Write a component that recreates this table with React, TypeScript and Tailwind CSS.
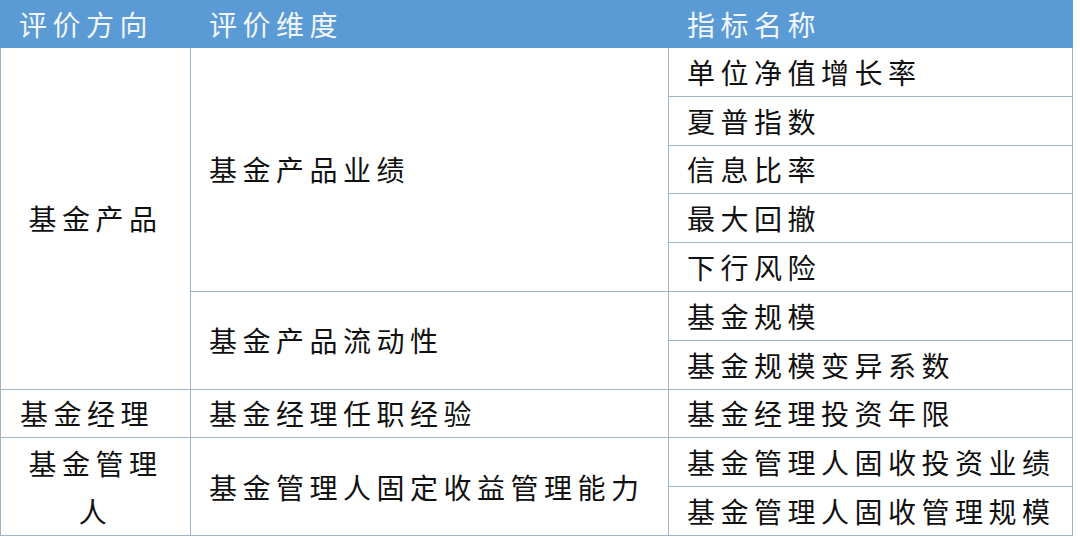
const font = { fontFamily: '"Noto Sans CJK SC", "Noto Sans", sans-serif' };

type Cell = { text: React.ReactNode; pos: string; align?: string };

const cells: Cell[] = [
  { text: "基金产品", pos: "col-start-1 row-start-1 row-span-7", align: "justify-center" },
  { text: "基金经理", pos: "col-start-1 row-start-8 row-span-1", align: "pl-[19px]" },
  {
    text: (
      <span className="text-center leading-[48px]">
        基金管理
        <br />人
      </span>
    ),
    pos: "col-start-1 row-start-9 row-span-2",
    align: "justify-center",
  },
  { text: "基金产品业绩", pos: "col-start-2 row-start-1 row-span-5" },
  { text: "基金产品流动性", pos: "col-start-2 row-start-6 row-span-2" },
  { text: "基金经理任职经验", pos: "col-start-2 row-start-8 row-span-1" },
  { text: "基金管理人固定收益管理能力", pos: "col-start-2 row-start-9 row-span-2" },
  { text: "单位净值增长率", pos: "col-start-3 row-start-1" },
  { text: "夏普指数", pos: "col-start-3 row-start-2" },
  { text: "信息比率", pos: "col-start-3 row-start-3" },
  { text: "最大回撤", pos: "col-start-3 row-start-4" },
  { text: "下行风险", pos: "col-start-3 row-start-5" },
  { text: "基金规模", pos: "col-start-3 row-start-6" },
  { text: "基金规模变异系数", pos: "col-start-3 row-start-7" },
  { text: "基金经理投资年限", pos: "col-start-3 row-start-8" },
  { text: "基金管理人固收投资业绩", pos: "col-start-3 row-start-9" },
  { text: "基金管理人固收管理规模", pos: "col-start-3 row-start-10" },
];

export default function App() {
  return (
    <div className="w-[1080px] h-[545px] bg-white overflow-hidden" style={font}>
      <div className="w-[1073px]">
        {/* header */}
        <div className="grid grid-cols-[190px_478px_405px] h-[48px] bg-[#5b9bd5] text-[#f2f6fb] text-[28px] tracking-[5.5px]">
          <div className="flex items-center pl-[19px]">评价方向</div>
          <div className="flex items-center pl-[19px]">评价维度</div>
          <div className="flex items-center pl-[19px]">指标名称</div>
        </div>

        {/* body */}
        <div className="grid grid-cols-[189px_477px_403px] grid-rows-[repeat(10,47.8px)] gap-px p-px pt-0 bg-[#9fb4c6] text-[#111] text-[28px] tracking-[5.5px]">
          {cells.map((c, i) => (
            <div key={i} className={`${c.pos} bg-white flex items-center ${c.align ?? "pl-[18px]"}`}>
              {c.text}
            </div>
          ))}
        </div>
      </div>
    </div>
  );
}
